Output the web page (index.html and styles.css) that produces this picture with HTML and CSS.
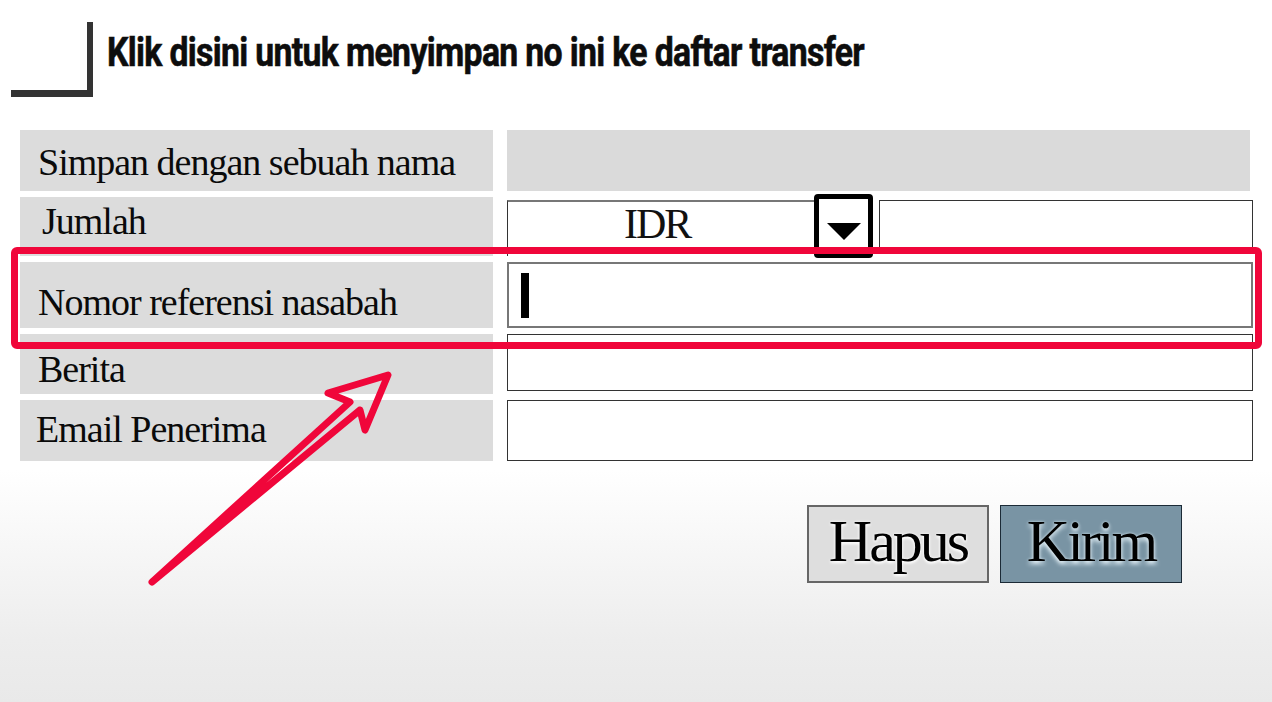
FILE: index.html
```html
<!DOCTYPE html>
<html lang="id">
<head>
<meta charset="utf-8">
<title>Simpan ke daftar transfer</title>
<link rel="stylesheet" href="styles.css">
</head>
<body>
<div class="page">
  <header class="head">
    <span class="corner"></span>
    <h1 class="title"><span class="title-text">Klik disini untuk menyimpan no ini ke daftar transfer</span></h1>
  </header>

  <div class="form">
    <div class="label l1">Simpan dengan sebuah nama</div>
    <div class="field field-gray"></div>

    <div class="label l2">Jumlah</div>
    <div class="field amount">
      <div class="select">
        <span class="idr">IDR</span>
        <span class="drop"><span class="tri"></span></span>
      </div>
      <div class="input input-amount"></div>
    </div>

    <div class="label l3">Nomor referensi nasabah</div>
    <div class="field input input-focus"><span class="caret"></span></div>

    <div class="label l4">Berita</div>
    <div class="field input input-short"></div>

    <div class="label l5">Email Penerima</div>
    <div class="field input"></div>
  </div>

  <div class="actions">
    <button class="btn btn-reset" type="button">Hapus</button>
    <button class="btn btn-send" type="button">Kirim</button>
  </div>

  <div class="highlight"></div>
  <svg class="arrow" viewBox="0 0 1272 702" width="1272" height="702" aria-hidden="true">
    <path d="M152 582 L350 402 L328 393 L388 375 L365 430 L360 410 Z" fill="none" stroke="#f0063a" stroke-width="7" stroke-linejoin="round" stroke-linecap="round"/>
  </svg>
</div>
</body>
</html>
```

FILE: styles.css
```css
* { box-sizing: border-box; }

html, body {
  margin: 0;
  padding: 0;
}

body {
  width: 1272px;
  height: 702px;
  overflow: hidden;
  background: linear-gradient(to bottom, #ffffff 0, #ffffff 470px, #ededed 640px, #e9e9e9 702px);
  font-family: "Liberation Serif", "Times New Roman", serif;
  color: #111;
}

.page {
  position: relative;
  width: 1272px;
  height: 702px;
}

/* Header */
.head {
  display: flex;
  align-items: flex-start;
  padding: 22px 0 0 11px;
  height: 97px;
}

.corner {
  flex: none;
  width: 82px;
  height: 75px;
  border-right: 6px solid #333;
  border-bottom: 7px solid #333;
}

.title {
  margin: 0 0 0 14px;
  padding-top: 11px;
  font-family: Roboto, "Liberation Sans", sans-serif;
  font-weight: 700;
  font-size: 40px;
  line-height: 40px;
  color: #0d0d0d;
  white-space: nowrap;
}

.title-text {
  display: inline-block;
  transform: scaleX(0.845);
  transform-origin: left center;
  letter-spacing: -0.8px;
  -webkit-text-stroke: 0.6px #0d0d0d;
}

/* Form grid */
.form {
  display: grid;
  grid-template-columns: 473px 746px;
  grid-template-rows: 61px 59px 66px 60px 61px;
  column-gap: 14px;
  row-gap: 6px;
  margin: 33px 0 0 20px;
}

.label {
  background: #dcdcdc;
  font-size: 38px;
  line-height: 42px;
  letter-spacing: -1px;
  padding-left: 18px;
  white-space: nowrap;
  color: #0a0a0a;
}

.l1 { padding-top: 11px; }
.l2 { padding-top: 3px; padding-left: 22px; }
.l3 { padding-top: 19px; }
.l4 { padding-top: 14px; }
.l5 { padding-top: 8px; padding-left: 16px; }

.field-gray {
  background: #dadada;
  margin-right: 3px;
}

.input {
  background: #fff;
  border: 1px solid #333;
}

.input-focus {
  border: 2px solid #777;
  padding: 9px 0 0 12px;
}

.input-short {
  margin-bottom: 3px;
}

.caret {
  display: block;
  width: 8px;
  height: 45px;
  background: #000;
}

/* Amount row */
.amount {
  display: flex;
  gap: 7px;
}

.select {
  position: relative;
  width: 365px;
  margin-top: 3px;
  border-top: 2px solid #777;
  border-left: 1px solid #333;
  background: #fff;
}

.idr {
  display: block;
  padding: 0 0 0 116px;
  font-size: 42px;
  line-height: 44px;
  letter-spacing: -2px;
}

.drop {
  position: absolute;
  left: 306px;
  top: -8px;
  width: 59px;
  height: 64px;
  border: 5px solid #000;
  border-radius: 4px;
  background: #fff;
  display: flex;
  justify-content: center;
  padding-top: 24px;
}

.tri {
  width: 0;
  height: 0;
  border-left: 17px solid transparent;
  border-right: 17px solid transparent;
  border-top: 17px solid #000;
}

.input-amount {
  flex: 1;
  margin-top: 3px;
  margin-bottom: 4px;
}

/* Buttons */
.actions {
  display: flex;
  justify-content: flex-end;
  gap: 11px;
  margin: 44px 90px 0 0;
}

.btn {
  width: 182px;
  height: 78px;
  padding: 0 0 6px;
  font-family: "Liberation Serif", "Times New Roman", serif;
  font-size: 60px;
  line-height: 60px;
  letter-spacing: -3px;
  color: #000;
  text-shadow: 0 2px 3px #fff, 0 0 3px #fff;
  cursor: pointer;
}

.btn-reset {
  background: #dedede;
  border: 2px solid #666;
}

.btn-send {
  background: #7994a4;
  border: 1px solid #1b2a36;
  text-shadow: 0 3px 4px #e6f2f8, 0 0 3px #cfe3ee;
}

/* Annotations */
.highlight {
  position: absolute;
  left: 11px;
  top: 247px;
  width: 1251px;
  height: 102px;
  border: 7px solid #f0063a;
  border-radius: 6px;
  pointer-events: none;
}

.arrow {
  position: absolute;
  left: 0;
  top: 0;
  pointer-events: none;
}
```
